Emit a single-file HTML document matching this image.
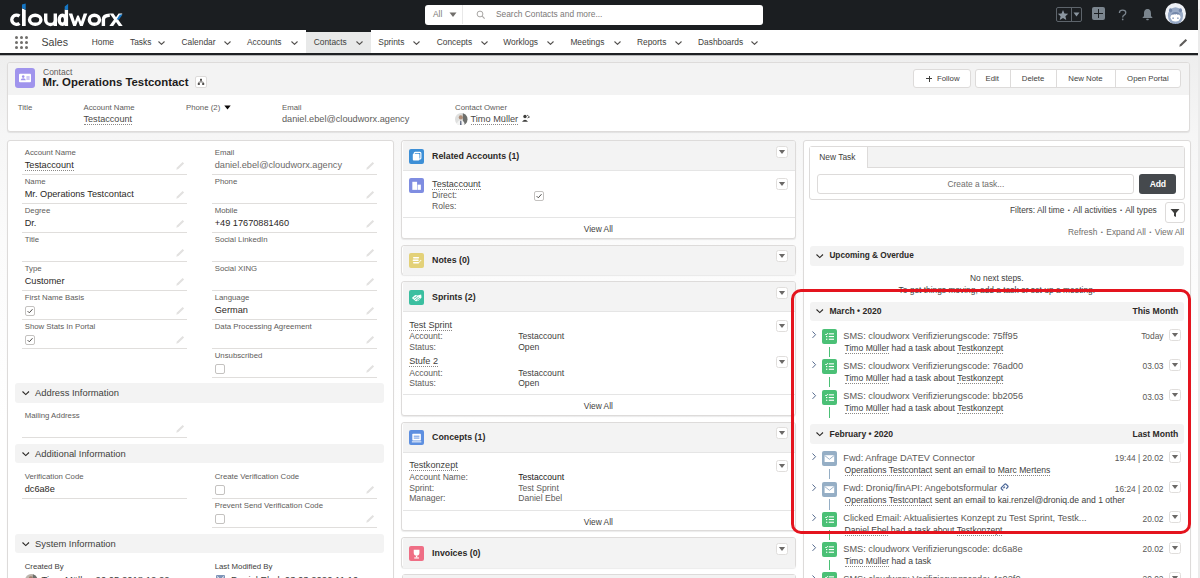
<!DOCTYPE html><html><head><meta charset="utf-8"><style>
html,body{margin:0;padding:0;width:1200px;height:578px;overflow:hidden;background:linear-gradient(to bottom,#eeeeee 0px,#eeeeee 56px,#f6f6f6 135px,#fbfbfb 240px,#ffffff 420px);font-family:"Liberation Sans",sans-serif;}
.a{position:absolute;}
.t{position:absolute;white-space:nowrap;}
.u{border-bottom:1px dotted #8a8886;}
.card{position:absolute;background:#fff;border:1px solid #dddbda;border-radius:3px;box-sizing:border-box;box-shadow:0 1px 1px rgba(0,0,0,0.08);}
</style></head><body>
<div class="a" style="left:0px;top:0px;width:1200.00px;height:30.00px;background:#1b1e21"></div>
<svg class="a" style="left:0;top:0" width="130" height="30" viewBox="0 0 130 30"><g fill="none" stroke="#fff" stroke-width="3.4"><path d="M19.5 16.2 A4.75 4.55 0 1 0 19.5 23.3"/><ellipse cx="35.2" cy="19.75" rx="5.7" ry="4.55"/><path d="M45.7 13.5 V19.9 A4.8 4.55 0 0 0 55.3 19.9 V13.5 M55.3 19 V26"/><ellipse cx="62.4" cy="19.75" rx="3.2" ry="4.55"/><ellipse cx="94.4" cy="19.75" rx="5.1" ry="4.55"/><path d="M103.4 26 V19.5 Q103.4 15.2 109.8 15.2"/></g><path d="M68.7 13.5 L72.3 13.5 L74.9 21.6 L77.2 15.4 L78.8 15.4 L81.1 21.6 L83.7 13.5 L87.3 13.5 L82.8 26 L80 26 L78 20.4 L76 26 L73.2 26 Z" fill="#fff"/><path d="M109.6 13.5 L113.4 13.5 L116 17.2 L118.6 13.5 L122.4 13.5 L118 19.6 L122.7 26 L118.8 26 L116 22.1 L113.2 26 L109.3 26 L114 19.6 Z" fill="#fff"/><path d="M22 8.2 L25.7 9.9 L25.7 26 L22 26 Z" fill="#fff"/><path d="M64.7 9.6 L68.1 10 L68.1 26 L64.7 26 Z" fill="#fff"/><path d="M22 4.5 L25.7 3.6 L25.7 9.8 L22 8.1 Z" fill="#1576c4"/><path d="M64.7 6.4 L68.1 3.8 L68.1 10 L64.7 9.5 Z" fill="#1576c4"/><path d="M116.6 19.4 L119.8 14.5 L122.6 14.5 L119 19.4 Z" fill="#1576c4"/></svg>
<div class="a" style="left:425px;top:4.5px;width:338.00px;height:20.00px;background:#fff;border-radius:3px"></div>
<div class="t" style="left:433px;top:8.00px;font-size:8.4px;line-height:12px;color:#7b7977;font-weight:normal;">All</div>
<svg class="a" style="left:449px;top:11.5px" width="8" height="6" viewBox="0 0 8 6"><path d="M0.5 0.5 L7.5 0.5 L4 5 Z" fill="#706e6b"/></svg>
<div class="a" style="left:462px;top:5px;width:1.00px;height:19.00px;background:#e8e8e8"></div>
<svg class="a" style="left:476px;top:9.5px" width="10" height="10" viewBox="0 0 10 10"><circle cx="4" cy="4" r="2.9" fill="none" stroke="#a8a6a4" stroke-width="1"/><path d="M6.2 6.2 L8.6 8.6" stroke="#a8a6a4" stroke-width="1.1"/></svg>
<div class="t" style="left:496px;top:8.00px;font-size:8.37px;line-height:12px;color:#7b7977;font-weight:normal;">Search Contacts and more...</div>
<div class="a" style="left:1055.5px;top:7px;width:26.50px;height:15.00px;border:1px solid #5d646b;border-radius:2px;box-sizing:border-box"></div>
<div class="a" style="left:1070.5px;top:7px;width:1.00px;height:15.00px;background:#5d646b"></div>
<svg class="a" style="left:1057px;top:8.5px" width="12" height="12" viewBox="0 0 24 24"><path d="M12 2 L14.9 8.9 L22.4 9.6 L16.8 14.6 L18.5 22 L12 18.1 L5.5 22 L7.2 14.6 L1.6 9.6 L9.1 8.9 Z" fill="#8b96a0"/></svg>
<svg class="a" style="left:1073px;top:12px" width="7" height="5" viewBox="0 0 7 5"><path d="M0.5 0.5 L6.5 0.5 L3.5 4.5 Z" fill="#8b96a0"/></svg>
<div class="a" style="left:1092px;top:7.2px;width:13.00px;height:13.00px;background:#7b858e;border-radius:2px"></div>
<div class="a" style="left:1097.9px;top:9.2px;width:1.20px;height:9.00px;background:#1b1e21"></div>
<div class="a" style="left:1094px;top:13.1px;width:9.00px;height:1.20px;background:#1b1e21"></div>
<svg class="a" style="left:1115px;top:7px" width="15" height="15" viewBox="1115 7 15 15"><path d="M1119.4 13 Q1119.4 10.2 1122.6 10.2 Q1125.8 10.2 1125.8 12.8 Q1125.8 14.4 1123.8 15.3 Q1122.7 15.8 1122.7 17.4" fill="none" stroke="#7b858e" stroke-width="1.3"/><circle cx="1122.7" cy="19.4" r="0.85" fill="#7b858e"/></svg>
<svg class="a" style="left:1141px;top:8px" width="13" height="13" viewBox="0 0 13 13"><path d="M6.5 1 C3.8 1 3 3.2 3 5.5 L3 8 L1.3 10 L11.7 10 L10 8 L10 5.5 C10 3.2 9.2 1 6.5 1 Z" fill="#7b858e"/><rect x="5.2" y="10.8" width="2.6" height="1.4" rx="0.7" fill="#7b858e"/></svg>
<svg class="a" style="left:1165px;top:2.75px" width="21" height="21" viewBox="0 0 21 21"><defs><clipPath id="avc"><circle cx="10.5" cy="10.5" r="10.5"/></clipPath></defs><g clip-path="url(#avc)"><rect width="21" height="21" fill="#eef1f6"/><ellipse cx="10.5" cy="12.8" rx="7.6" ry="8.6" fill="#98aac6"/><ellipse cx="5.6" cy="7.3" rx="1.6" ry="2.1" fill="#7387aa"/><ellipse cx="15.4" cy="7.3" rx="1.6" ry="2.1" fill="#7387aa"/><ellipse cx="10.5" cy="14.2" rx="5" ry="4.2" fill="#fff"/><path d="M5.6 13 Q6.5 9 10.5 9 Q14.5 9 15.4 13 Q14 11 12.5 11.8 Q11.5 10.5 10.5 11.6 Q9 10.6 8 11.8 Q7 11 5.6 13 Z" fill="#7387aa"/><ellipse cx="8.1" cy="15.2" rx="0.8" ry="0.9" fill="#8a9cbb"/><ellipse cx="12.9" cy="15.2" rx="0.8" ry="0.9" fill="#8a9cbb"/><path d="M7.5 21 L9 19.8 L10.5 21 L12 19.8 L13.5 21 Z" fill="#6f83a6"/></g></svg>
<div class="a" style="left:0px;top:30px;width:1200.00px;height:23.00px;background:#fff"></div>
<div class="a" style="left:0px;top:53px;width:1200.00px;height:2.00px;background:#1e2023"></div>
<div class="a" style="left:0px;top:55px;width:1200.00px;height:1.00px;background:rgba(30,32,35,0.28)"></div>
<div class="a" style="left:14.5px;top:35.5px;width:3px;height:3px;border-radius:50%;background:#706e6b"></div>
<div class="a" style="left:19.5px;top:35.5px;width:3px;height:3px;border-radius:50%;background:#706e6b"></div>
<div class="a" style="left:24.5px;top:35.5px;width:3px;height:3px;border-radius:50%;background:#706e6b"></div>
<div class="a" style="left:14.5px;top:40.5px;width:3px;height:3px;border-radius:50%;background:#706e6b"></div>
<div class="a" style="left:19.5px;top:40.5px;width:3px;height:3px;border-radius:50%;background:#706e6b"></div>
<div class="a" style="left:24.5px;top:40.5px;width:3px;height:3px;border-radius:50%;background:#706e6b"></div>
<div class="a" style="left:14.5px;top:45.5px;width:3px;height:3px;border-radius:50%;background:#706e6b"></div>
<div class="a" style="left:19.5px;top:45.5px;width:3px;height:3px;border-radius:50%;background:#706e6b"></div>
<div class="a" style="left:24.5px;top:45.5px;width:3px;height:3px;border-radius:50%;background:#706e6b"></div>
<div class="t" style="left:41.5px;top:36.00px;font-size:10.6px;line-height:12px;color:#3e3e3c;font-weight:normal;">Sales</div>
<div class="a" style="left:305.8px;top:30px;width:65.20px;height:23.00px;background:#e8e9e9"></div>
<div class="a" style="left:305.8px;top:30px;width:65.20px;height:1.80px;background:#1b1e21"></div>
<div class="t" style="left:91.7px;top:36.00px;font-size:8.4px;line-height:12px;color:#3e3e3c;font-weight:normal;">Home</div>
<div class="t" style="left:130px;top:36.00px;font-size:8.4px;line-height:12px;color:#3e3e3c;font-weight:normal;">Tasks</div>
<svg class="a" style="left:157.2px;top:39.58px" width="9" height="5.85" viewBox="-1 -1 9 5.85"><path d="M0.5 0.5 L3.5 3.35 L6.5 0.5" fill="none" stroke="#514f4d" stroke-width="1.1"/></svg>
<div class="t" style="left:181.5px;top:36.00px;font-size:8.4px;line-height:12px;color:#3e3e3c;font-weight:normal;">Calendar</div>
<svg class="a" style="left:223.2px;top:39.58px" width="9" height="5.85" viewBox="-1 -1 9 5.85"><path d="M0.5 0.5 L3.5 3.35 L6.5 0.5" fill="none" stroke="#514f4d" stroke-width="1.1"/></svg>
<div class="t" style="left:247px;top:36.00px;font-size:8.4px;line-height:12px;color:#3e3e3c;font-weight:normal;">Accounts</div>
<svg class="a" style="left:289.5px;top:39.58px" width="9" height="5.85" viewBox="-1 -1 9 5.85"><path d="M0.5 0.5 L3.5 3.35 L6.5 0.5" fill="none" stroke="#514f4d" stroke-width="1.1"/></svg>
<div class="t" style="left:313.75px;top:36.00px;font-size:8.4px;line-height:12px;color:#3e3e3c;font-weight:normal;">Contacts</div>
<svg class="a" style="left:354.5px;top:39.58px" width="9" height="5.85" viewBox="-1 -1 9 5.85"><path d="M0.5 0.5 L3.5 3.35 L6.5 0.5" fill="none" stroke="#514f4d" stroke-width="1.1"/></svg>
<div class="t" style="left:378.3px;top:36.00px;font-size:8.4px;line-height:12px;color:#3e3e3c;font-weight:normal;">Sprints</div>
<svg class="a" style="left:412.4px;top:39.58px" width="9" height="5.85" viewBox="-1 -1 9 5.85"><path d="M0.5 0.5 L3.5 3.35 L6.5 0.5" fill="none" stroke="#514f4d" stroke-width="1.1"/></svg>
<div class="t" style="left:436.7px;top:36.00px;font-size:8.4px;line-height:12px;color:#3e3e3c;font-weight:normal;">Concepts</div>
<svg class="a" style="left:479.5px;top:39.58px" width="9" height="5.85" viewBox="-1 -1 9 5.85"><path d="M0.5 0.5 L3.5 3.35 L6.5 0.5" fill="none" stroke="#514f4d" stroke-width="1.1"/></svg>
<div class="t" style="left:503.3px;top:36.00px;font-size:8.4px;line-height:12px;color:#3e3e3c;font-weight:normal;">Worklogs</div>
<svg class="a" style="left:546.3px;top:39.58px" width="9" height="5.85" viewBox="-1 -1 9 5.85"><path d="M0.5 0.5 L3.5 3.35 L6.5 0.5" fill="none" stroke="#514f4d" stroke-width="1.1"/></svg>
<div class="t" style="left:570.4px;top:36.00px;font-size:8.4px;line-height:12px;color:#3e3e3c;font-weight:normal;">Meetings</div>
<svg class="a" style="left:612.5px;top:39.58px" width="9" height="5.85" viewBox="-1 -1 9 5.85"><path d="M0.5 0.5 L3.5 3.35 L6.5 0.5" fill="none" stroke="#514f4d" stroke-width="1.1"/></svg>
<div class="t" style="left:637px;top:36.00px;font-size:8.4px;line-height:12px;color:#3e3e3c;font-weight:normal;">Reports</div>
<svg class="a" style="left:673.5px;top:39.58px" width="9" height="5.85" viewBox="-1 -1 9 5.85"><path d="M0.5 0.5 L3.5 3.35 L6.5 0.5" fill="none" stroke="#514f4d" stroke-width="1.1"/></svg>
<div class="t" style="left:698px;top:36.00px;font-size:8.4px;line-height:12px;color:#3e3e3c;font-weight:normal;">Dashboards</div>
<svg class="a" style="left:749.5px;top:39.58px" width="9" height="5.85" viewBox="-1 -1 9 5.85"><path d="M0.5 0.5 L3.5 3.35 L6.5 0.5" fill="none" stroke="#514f4d" stroke-width="1.1"/></svg>
<svg class="a" style="left:1178.5px;top:38.00px" width="9" height="9" viewBox="0 0 9 9"><path d="M0.3 8.7 L0.9 6.6 L6.6 0.9 L8.1 2.4 L2.4 8.1 Z" fill="#5e5c5a"/></svg>
<div class="card" style="left:7px;top:62px;width:1182.5px;height:70px;"></div>
<div class="a" style="left:8px;top:63px;width:1180.50px;height:32.00px;background:#f3f3f3;border-radius:2px 2px 0 0"></div>
<div class="a" style="left:15px;top:67.5px;width:20.00px;height:20.00px;background:#a094ed;border-radius:3px"></div>
<svg class="a" style="left:15px;top:67.5px" width="20" height="20" viewBox="0 0 20 20"><rect x="4" y="5.8" width="12" height="8.4" rx="1" fill="#fff"/><circle cx="8.2" cy="8.6" r="1.3" fill="#a094ed"/><path d="M5.6 12.3 Q5.8 10.2 8.2 10.2 Q10.6 10.2 10.8 12.3 Z" fill="#a094ed"/><rect x="11.2" y="8.5" width="3.6" height="1" rx="0.4" fill="#a094ed"/><rect x="11.2" y="10.5" width="3.6" height="1" rx="0.4" fill="#a094ed"/></svg>
<div class="t" style="left:43px;top:65.50px;font-size:8.5px;line-height:12px;color:#5e5c5a;font-weight:normal;">Contact</div>
<div class="t" style="left:42.5px;top:75.30px;font-size:11.4px;line-height:14px;color:#1e1c1b;font-weight:bold;">Mr. Operations Testcontact</div>
<div class="a" style="left:195px;top:76px;width:12.00px;height:11.60px;background:#fff;border:1px solid #dddbda;border-radius:2px;box-sizing:border-box"></div>
<svg class="a" style="left:197px;top:78px" width="8" height="8" viewBox="0 0 8 8"><rect x="3" y="0.8" width="2" height="2" fill="#514f4d"/><rect x="0.8" y="5" width="2" height="2" fill="#514f4d"/><rect x="5.2" y="5" width="2" height="2" fill="#514f4d"/><path d="M4 2.8 V4 M1.8 5 V4 H6.2 V5" fill="none" stroke="#514f4d" stroke-width="0.7"/></svg>
<div class="a" style="left:913px;top:69px;width:58.30px;height:19.00px;background:#fff;border:1px solid #dddbda;border-radius:3px;box-sizing:border-box"></div>
<div class="a" style="left:926px;top:78.2px;width:6.00px;height:0.70px;background:#3e3e3c"></div>
<div class="a" style="left:928.65px;top:75.5px;width:0.70px;height:6.10px;background:#3e3e3c"></div>
<div class="t" style="left:937px;top:72.50px;font-size:7.8px;line-height:12px;color:#3e3e3c;font-weight:normal;">Follow</div>
<div class="a" style="left:974.5px;top:69px;width:206.80px;height:19.00px;background:#fff;border:1px solid #dddbda;border-radius:3px;box-sizing:border-box"></div>
<div class="a" style="left:1010px;top:69px;width:1.00px;height:19.00px;background:#dddbda"></div>
<div class="a" style="left:1056.3px;top:69px;width:1.00px;height:19.00px;background:#dddbda"></div>
<div class="a" style="left:1114.5px;top:69px;width:1.00px;height:19.00px;background:#dddbda"></div>
<div class="t" style="left:792.3px;width:400px;top:72.50px;font-size:7.8px;line-height:12px;color:#3e3e3c;font-weight:normal;text-align:center;">Edit</div>
<div class="t" style="left:833.0999999999999px;width:400px;top:72.50px;font-size:7.8px;line-height:12px;color:#3e3e3c;font-weight:normal;text-align:center;">Delete</div>
<div class="t" style="left:885.4000000000001px;width:400px;top:72.50px;font-size:7.8px;line-height:12px;color:#3e3e3c;font-weight:normal;text-align:center;">New Note</div>
<div class="t" style="left:947.9000000000001px;width:400px;top:72.50px;font-size:7.8px;line-height:12px;color:#3e3e3c;font-weight:normal;text-align:center;">Open Portal</div>
<div class="t" style="left:17.8px;top:101.50px;font-size:7.8px;line-height:12px;color:#5e5c5a;font-weight:normal;">Title</div>
<div class="t" style="left:83.5px;top:101.50px;font-size:7.8px;line-height:12px;color:#5e5c5a;font-weight:normal;">Account Name</div>
<div class="t" style="left:186px;top:101.50px;font-size:7.8px;line-height:12px;color:#5e5c5a;font-weight:normal;">Phone (2)</div>
<div class="t" style="left:282px;top:101.50px;font-size:7.8px;line-height:12px;color:#5e5c5a;font-weight:normal;">Email</div>
<div class="t" style="left:455px;top:101.50px;font-size:7.8px;line-height:12px;color:#5e5c5a;font-weight:normal;">Contact Owner</div>
<svg class="a" style="left:223.5px;top:105px" width="7" height="5" viewBox="0 0 7 5"><path d="M0.3 0.5 L6.7 0.5 L3.5 4.5 Z" fill="#080707"/></svg>
<div class="t" style="left:83.5px;top:112.60px;font-size:9.1px;line-height:12px;color:#4a4846;font-weight:normal;"><span class="u">Testaccount</span></div>
<div class="t" style="left:282px;top:112.60px;font-size:9.2px;line-height:12px;color:#5e5c5a;font-weight:normal;">daniel.ebel@cloudworx.agency</div>
<svg class="a" style="left:455px;top:112.5px" width="12.5" height="12.5" viewBox="0 0 12 12"><defs><clipPath id="av1"><circle cx="6" cy="6" r="6"/></clipPath></defs><g clip-path="url(#av1)"><rect width="12" height="12" fill="#dfe0df"/><rect x="7.5" y="0" width="5" height="12" fill="#6d6f6c"/><circle cx="5.6" cy="4.2" r="2" fill="#b08f7a"/><path d="M1.5 12 Q2 7 5.6 7 Q9 7 9.5 12 Z" fill="#f4f4f4"/><path d="M5.2 7.5 L6 7.5 L6.2 12 L5 12 Z" fill="#2f3c5a"/></g></svg>
<div class="t" style="left:470.5px;top:112.60px;font-size:9.2px;line-height:12px;color:#4a4846;font-weight:normal;"><span class="u">Timo Müller</span></div>
<svg class="a" style="left:522px;top:114px" width="8" height="8" viewBox="0 0 8 8"><circle cx="3" cy="2.5" r="1.7" fill="#3e3e3c"/><path d="M0 7.8 Q3 3.5 6 7.8 Z" fill="#3e3e3c"/><path d="M5 1 L7.5 3 L5.5 4" fill="none" stroke="#3e3e3c" stroke-width="0.8"/></svg>
<div class="card" style="left:6.5px;top:140px;width:387px;height:460px;"></div>
<div class="t" style="left:24.7px;top:147.20px;font-size:7.8px;line-height:12px;color:#5e5c5a;font-weight:normal;">Account Name</div>
<div class="t" style="left:24.7px;top:159.30px;font-size:9.2px;line-height:12px;color:#2b2826;font-weight:normal;"><span class="u">Testaccount</span></div>
<svg class="a" style="left:175.5px;top:161.00px" width="9" height="9" viewBox="0 0 9 9"><path d="M0.3 8.7 L0.9 6.6 L6.6 0.9 L8.1 2.4 L2.4 8.1 Z" fill="#e2e1e0"/></svg>
<div class="a" style="left:22px;top:174px;width:165.00px;height:1.00px;background:#e0dedc"></div>
<div class="t" style="left:24.7px;top:176.20px;font-size:7.8px;line-height:12px;color:#5e5c5a;font-weight:normal;">Name</div>
<div class="t" style="left:24.7px;top:188.30px;font-size:9.2px;line-height:12px;color:#2b2826;font-weight:normal;">Mr. Operations Testcontact</div>
<svg class="a" style="left:175.5px;top:190.00px" width="9" height="9" viewBox="0 0 9 9"><path d="M0.3 8.7 L0.9 6.6 L6.6 0.9 L8.1 2.4 L2.4 8.1 Z" fill="#e2e1e0"/></svg>
<div class="a" style="left:22px;top:203px;width:165.00px;height:1.00px;background:#e0dedc"></div>
<div class="t" style="left:24.7px;top:205.20px;font-size:7.8px;line-height:12px;color:#5e5c5a;font-weight:normal;">Degree</div>
<div class="t" style="left:24.7px;top:217.30px;font-size:9.2px;line-height:12px;color:#2b2826;font-weight:normal;">Dr.</div>
<svg class="a" style="left:175.5px;top:219.00px" width="9" height="9" viewBox="0 0 9 9"><path d="M0.3 8.7 L0.9 6.6 L6.6 0.9 L8.1 2.4 L2.4 8.1 Z" fill="#e2e1e0"/></svg>
<div class="a" style="left:22px;top:232px;width:165.00px;height:1.00px;background:#e0dedc"></div>
<div class="t" style="left:24.7px;top:234.20px;font-size:7.8px;line-height:12px;color:#5e5c5a;font-weight:normal;">Title</div>
<svg class="a" style="left:175.5px;top:248.00px" width="9" height="9" viewBox="0 0 9 9"><path d="M0.3 8.7 L0.9 6.6 L6.6 0.9 L8.1 2.4 L2.4 8.1 Z" fill="#e2e1e0"/></svg>
<div class="a" style="left:22px;top:261px;width:165.00px;height:1.00px;background:#e0dedc"></div>
<div class="t" style="left:24.7px;top:263.20px;font-size:7.8px;line-height:12px;color:#5e5c5a;font-weight:normal;">Type</div>
<div class="t" style="left:24.7px;top:275.30px;font-size:9.2px;line-height:12px;color:#2b2826;font-weight:normal;">Customer</div>
<svg class="a" style="left:175.5px;top:277.00px" width="9" height="9" viewBox="0 0 9 9"><path d="M0.3 8.7 L0.9 6.6 L6.6 0.9 L8.1 2.4 L2.4 8.1 Z" fill="#e2e1e0"/></svg>
<div class="a" style="left:22px;top:290px;width:165.00px;height:1.00px;background:#e0dedc"></div>
<div class="t" style="left:24.7px;top:292.20px;font-size:7.8px;line-height:12px;color:#5e5c5a;font-weight:normal;">First Name Basis</div>
<div class="a" style="left:25px;top:306px;width:10.00px;height:10.00px;background:#fff;border:1px solid #c4c2c0;border-radius:2px;box-sizing:border-box"></div>
<svg class="a" style="left:25px;top:306px" width="10" height="10" viewBox="0 0 10 10"><path d="M2.6 5.1 L4.3 6.8 L7.5 3.2" fill="none" stroke="#514f4d" stroke-width="1"/></svg>
<svg class="a" style="left:175.5px;top:306.00px" width="9" height="9" viewBox="0 0 9 9"><path d="M0.3 8.7 L0.9 6.6 L6.6 0.9 L8.1 2.4 L2.4 8.1 Z" fill="#e2e1e0"/></svg>
<div class="a" style="left:22px;top:319px;width:165.00px;height:1.00px;background:#e0dedc"></div>
<div class="t" style="left:24.7px;top:321.20px;font-size:7.8px;line-height:12px;color:#5e5c5a;font-weight:normal;">Show Stats In Portal</div>
<div class="a" style="left:25px;top:335px;width:10.00px;height:10.00px;background:#fff;border:1px solid #c4c2c0;border-radius:2px;box-sizing:border-box"></div>
<svg class="a" style="left:25px;top:335px" width="10" height="10" viewBox="0 0 10 10"><path d="M2.6 5.1 L4.3 6.8 L7.5 3.2" fill="none" stroke="#514f4d" stroke-width="1"/></svg>
<svg class="a" style="left:175.5px;top:335.00px" width="9" height="9" viewBox="0 0 9 9"><path d="M0.3 8.7 L0.9 6.6 L6.6 0.9 L8.1 2.4 L2.4 8.1 Z" fill="#e2e1e0"/></svg>
<div class="a" style="left:22px;top:348px;width:165.00px;height:1.00px;background:#e0dedc"></div>
<div class="t" style="left:214.7px;top:147.20px;font-size:7.8px;line-height:12px;color:#5e5c5a;font-weight:normal;">Email</div>
<div class="t" style="left:214.7px;top:159.30px;font-size:9.2px;line-height:12px;color:#6b6967;font-weight:normal;">daniel.ebel@cloudworx.agency</div>
<svg class="a" style="left:365.5px;top:161.00px" width="9" height="9" viewBox="0 0 9 9"><path d="M0.3 8.7 L0.9 6.6 L6.6 0.9 L8.1 2.4 L2.4 8.1 Z" fill="#e2e1e0"/></svg>
<div class="a" style="left:212px;top:174px;width:165.00px;height:1.00px;background:#e0dedc"></div>
<div class="t" style="left:214.7px;top:176.20px;font-size:7.8px;line-height:12px;color:#5e5c5a;font-weight:normal;">Phone</div>
<svg class="a" style="left:365.5px;top:190.00px" width="9" height="9" viewBox="0 0 9 9"><path d="M0.3 8.7 L0.9 6.6 L6.6 0.9 L8.1 2.4 L2.4 8.1 Z" fill="#e2e1e0"/></svg>
<div class="a" style="left:212px;top:203px;width:165.00px;height:1.00px;background:#e0dedc"></div>
<div class="t" style="left:214.7px;top:205.20px;font-size:7.8px;line-height:12px;color:#5e5c5a;font-weight:normal;">Mobile</div>
<div class="t" style="left:214.7px;top:217.30px;font-size:9.2px;line-height:12px;color:#2b2826;font-weight:normal;">+49 17670881460</div>
<svg class="a" style="left:365.5px;top:219.00px" width="9" height="9" viewBox="0 0 9 9"><path d="M0.3 8.7 L0.9 6.6 L6.6 0.9 L8.1 2.4 L2.4 8.1 Z" fill="#e2e1e0"/></svg>
<div class="a" style="left:212px;top:232px;width:165.00px;height:1.00px;background:#e0dedc"></div>
<div class="t" style="left:214.7px;top:234.20px;font-size:7.8px;line-height:12px;color:#5e5c5a;font-weight:normal;">Social LinkedIn</div>
<svg class="a" style="left:365.5px;top:248.00px" width="9" height="9" viewBox="0 0 9 9"><path d="M0.3 8.7 L0.9 6.6 L6.6 0.9 L8.1 2.4 L2.4 8.1 Z" fill="#e2e1e0"/></svg>
<div class="a" style="left:212px;top:261px;width:165.00px;height:1.00px;background:#e0dedc"></div>
<div class="t" style="left:214.7px;top:263.20px;font-size:7.8px;line-height:12px;color:#5e5c5a;font-weight:normal;">Social XING</div>
<svg class="a" style="left:365.5px;top:277.00px" width="9" height="9" viewBox="0 0 9 9"><path d="M0.3 8.7 L0.9 6.6 L6.6 0.9 L8.1 2.4 L2.4 8.1 Z" fill="#e2e1e0"/></svg>
<div class="a" style="left:212px;top:290px;width:165.00px;height:1.00px;background:#e0dedc"></div>
<div class="t" style="left:214.7px;top:292.20px;font-size:7.8px;line-height:12px;color:#5e5c5a;font-weight:normal;">Language</div>
<div class="t" style="left:214.7px;top:304.30px;font-size:9.2px;line-height:12px;color:#2b2826;font-weight:normal;">German</div>
<svg class="a" style="left:365.5px;top:306.00px" width="9" height="9" viewBox="0 0 9 9"><path d="M0.3 8.7 L0.9 6.6 L6.6 0.9 L8.1 2.4 L2.4 8.1 Z" fill="#e2e1e0"/></svg>
<div class="a" style="left:212px;top:319px;width:165.00px;height:1.00px;background:#e0dedc"></div>
<div class="t" style="left:214.7px;top:321.20px;font-size:7.8px;line-height:12px;color:#5e5c5a;font-weight:normal;">Data Processing Agreement</div>
<svg class="a" style="left:365.5px;top:335.00px" width="9" height="9" viewBox="0 0 9 9"><path d="M0.3 8.7 L0.9 6.6 L6.6 0.9 L8.1 2.4 L2.4 8.1 Z" fill="#e2e1e0"/></svg>
<div class="a" style="left:212px;top:348px;width:165.00px;height:1.00px;background:#e0dedc"></div>
<div class="t" style="left:214.7px;top:350.20px;font-size:7.8px;line-height:12px;color:#5e5c5a;font-weight:normal;">Unsubscribed</div>
<div class="a" style="left:215px;top:364px;width:10.00px;height:10.00px;background:#fff;border:1px solid #c4c2c0;border-radius:2px;box-sizing:border-box"></div>
<svg class="a" style="left:365.5px;top:364.00px" width="9" height="9" viewBox="0 0 9 9"><path d="M0.3 8.7 L0.9 6.6 L6.6 0.9 L8.1 2.4 L2.4 8.1 Z" fill="#e2e1e0"/></svg>
<div class="a" style="left:212px;top:377px;width:165.00px;height:1.00px;background:#e0dedc"></div>
<div class="a" style="left:15px;top:383.3px;width:369.30px;height:19.40px;background:#f3f3f3;border-radius:3px"></div>
<svg class="a" style="left:20.5px;top:390.24px" width="9.5" height="6.12" viewBox="-1 -1 9.5 6.12"><path d="M0.5 0.5 L3.75 3.62 L7.0 0.5" fill="none" stroke="#2b2826" stroke-width="1.1"/></svg>
<div class="t" style="left:35px;top:387.40px;font-size:9.4px;line-height:12px;color:#3e3e3c;font-weight:normal;">Address Information</div>
<div class="t" style="left:24.7px;top:410.20px;font-size:7.8px;line-height:12px;color:#5e5c5a;font-weight:normal;">Mailing Address</div>
<svg class="a" style="left:175.5px;top:424.00px" width="9" height="9" viewBox="0 0 9 9"><path d="M0.3 8.7 L0.9 6.6 L6.6 0.9 L8.1 2.4 L2.4 8.1 Z" fill="#e2e1e0"/></svg>
<div class="a" style="left:22px;top:437px;width:165.00px;height:1.00px;background:#e0dedc"></div>
<div class="a" style="left:15px;top:444px;width:369.30px;height:19.30px;background:#f3f3f3;border-radius:3px"></div>
<svg class="a" style="left:20.5px;top:450.89px" width="9.5" height="6.12" viewBox="-1 -1 9.5 6.12"><path d="M0.5 0.5 L3.75 3.62 L7.0 0.5" fill="none" stroke="#2b2826" stroke-width="1.1"/></svg>
<div class="t" style="left:35px;top:448.05px;font-size:9.4px;line-height:12px;color:#3e3e3c;font-weight:normal;">Additional Information</div>
<div class="t" style="left:24.7px;top:471.20px;font-size:7.8px;line-height:12px;color:#5e5c5a;font-weight:normal;">Verification Code</div>
<div class="t" style="left:24.7px;top:483.30px;font-size:9.2px;line-height:12px;color:#2b2826;font-weight:normal;">dc6a8e</div>
<div class="a" style="left:22px;top:498px;width:165.00px;height:1.00px;background:#e0dedc"></div>
<div class="t" style="left:214.7px;top:471.20px;font-size:7.8px;line-height:12px;color:#5e5c5a;font-weight:normal;">Create Verification Code</div>
<div class="a" style="left:215px;top:485px;width:10.00px;height:10.00px;background:#fff;border:1px solid #c4c2c0;border-radius:2px;box-sizing:border-box"></div>
<svg class="a" style="left:365.5px;top:485.00px" width="9" height="9" viewBox="0 0 9 9"><path d="M0.3 8.7 L0.9 6.6 L6.6 0.9 L8.1 2.4 L2.4 8.1 Z" fill="#e2e1e0"/></svg>
<div class="a" style="left:212px;top:498px;width:165.00px;height:1.00px;background:#e0dedc"></div>
<div class="t" style="left:214.7px;top:500.20px;font-size:7.8px;line-height:12px;color:#5e5c5a;font-weight:normal;">Prevent Send Verification Code</div>
<div class="a" style="left:215px;top:514px;width:10.00px;height:10.00px;background:#fff;border:1px solid #c4c2c0;border-radius:2px;box-sizing:border-box"></div>
<svg class="a" style="left:365.5px;top:514.00px" width="9" height="9" viewBox="0 0 9 9"><path d="M0.3 8.7 L0.9 6.6 L6.6 0.9 L8.1 2.4 L2.4 8.1 Z" fill="#e2e1e0"/></svg>
<div class="a" style="left:212px;top:527px;width:165.00px;height:1.00px;background:#e0dedc"></div>
<div class="a" style="left:15px;top:534px;width:369.30px;height:19.30px;background:#f3f3f3;border-radius:3px"></div>
<svg class="a" style="left:20.5px;top:540.89px" width="9.5" height="6.12" viewBox="-1 -1 9.5 6.12"><path d="M0.5 0.5 L3.75 3.62 L7.0 0.5" fill="none" stroke="#2b2826" stroke-width="1.1"/></svg>
<div class="t" style="left:35px;top:538.05px;font-size:9.4px;line-height:12px;color:#3e3e3c;font-weight:normal;">System Information</div>
<div class="t" style="left:24.7px;top:560.70px;font-size:7.8px;line-height:12px;color:#3e3e3c;font-weight:normal;">Created By</div>
<div class="t" style="left:214.7px;top:560.70px;font-size:7.8px;line-height:12px;color:#3e3e3c;font-weight:normal;">Last Modified By</div>
<svg class="a" style="left:25px;top:573.5px" width="12.5" height="12.5" viewBox="0 0 12 12"><defs><clipPath id="av2"><circle cx="6" cy="6" r="6"/></clipPath></defs><g clip-path="url(#av2)"><rect width="12" height="12" fill="#bdb6ae"/><rect x="7.5" y="0" width="5" height="12" fill="#6d6f6c"/><circle cx="5.6" cy="4.2" r="2" fill="#a07f6a"/><path d="M1.5 12 Q2 7 5.6 7 Q9 7 9.5 12 Z" fill="#eee"/></g></svg>
<div class="t" style="left:41.5px;top:573.80px;font-size:9.5px;line-height:12px;color:#3e3e3c;font-weight:normal;"><span class="u">Timo Müller</span>, 26.05.2018 12:22</div>
<svg class="a" style="left:216px;top:575px" width="9" height="8" viewBox="0 0 9 8"><rect x="0" y="0" width="9" height="8" rx="1" fill="#7e95b8"/><path d="M1 1.5 L4.5 4.5 L8 1.5" fill="none" stroke="#fff" stroke-width="0.9"/></svg>
<div class="t" style="left:231px;top:573.80px;font-size:9.5px;line-height:12px;color:#3e3e3c;font-weight:normal;"><span class="u">Daniel Ebel</span>, 03.03.2020 11:16</div>
<div class="card" style="left:401px;top:140.2px;width:395px;height:98.80px;"></div>
<div class="a" style="left:402.5px;top:141.2px;width:392.50px;height:30.20px;background:#f3f3f3;border-radius:2px 2px 0 0;border-bottom:1px solid #e5e5e5;box-sizing:border-box"></div>
<div class="a" style="left:409.2px;top:148.60000000000002px;width:15.20px;height:15.20px;background:#3d8fd6;border-radius:2px"></div>
<svg class="a" style="left:409.2px;top:148.60000000000002px" width="15.2" height="15.2" viewBox="0 0 16 16"><rect x="4" y="5" width="7" height="7" rx="1" fill="#fff"/><rect x="5.5" y="3.5" width="7" height="7" rx="1" fill="none" stroke="#fff" stroke-width="1.2"/></svg>
<div class="t" style="left:432.1px;top:150.00px;font-size:8.8px;line-height:12px;color:#2b2826;font-weight:bold;">Related Accounts (1)</div>
<div class="a" style="left:775.5px;top:145.7px;width:12.00px;height:12.00px;background:#fff;border:1px solid #e0dedc;border-radius:2.5px;box-sizing:border-box"></div>
<svg class="a" style="left:777.50px;top:148.70px" width="8" height="6" viewBox="0 0 8 6"><path d="M0.9 0.9 L7.1 0.9 L4 5 Z" fill="#6b6967"/></svg>
<div class="a" style="left:409.2px;top:178.2px;width:15.20px;height:15.20px;background:#7f8de1;border-radius:2px"></div>
<svg class="a" style="left:409.2px;top:178.2px" width="15.2" height="15.2" viewBox="0 0 16 16"><rect x="3.5" y="4" width="5" height="8.5" fill="#fff"/><rect x="9" y="7" width="3.5" height="5.5" fill="#fff"/></svg>
<div class="t" style="left:432.1px;top:178.00px;font-size:9.1px;line-height:12px;color:#3e3e3c;font-weight:normal;"><span class="u">Testaccount</span></div>
<div class="t" style="left:432.1px;top:189.00px;font-size:8.6px;line-height:12px;color:#5e5c5a;font-weight:normal;">Direct:</div>
<div class="t" style="left:432.1px;top:199.90px;font-size:8.6px;line-height:12px;color:#5e5c5a;font-weight:normal;">Roles:</div>
<div class="a" style="left:534.4px;top:190.7px;width:10.00px;height:10.00px;background:#fff;border:1px solid #c4c2c0;border-radius:2px;box-sizing:border-box"></div>
<svg class="a" style="left:534.4px;top:190.7px" width="10" height="10" viewBox="0 0 10 10"><path d="M2.6 5.1 L4.3 6.8 L7.5 3.2" fill="none" stroke="#514f4d" stroke-width="1"/></svg>
<div class="a" style="left:775.5px;top:178.4px;width:12.00px;height:12.00px;background:#fff;border:1px solid #e0dedc;border-radius:2.5px;box-sizing:border-box"></div>
<svg class="a" style="left:777.50px;top:181.40px" width="8" height="6" viewBox="0 0 8 6"><path d="M0.9 0.9 L7.1 0.9 L4 5 Z" fill="#6b6967"/></svg>
<div class="a" style="left:402.5px;top:217px;width:392.50px;height:1.00px;background:#e5e5e5"></div>
<div class="t" style="left:398.29999999999995px;width:400px;top:222.50px;font-size:8.4px;line-height:12px;color:#3e3e3c;font-weight:normal;text-align:center;">View All</div>
<div class="card" style="left:401px;top:244.7px;width:395px;height:30.30px;"></div>
<div class="a" style="left:402.5px;top:245.7px;width:392.50px;height:29.30px;background:#f3f3f3;border-radius:2px 2px 0 0"></div>
<div class="a" style="left:409.2px;top:252.65000000000003px;width:15.20px;height:15.20px;background:#e3d178;border-radius:2px"></div>
<svg class="a" style="left:409.2px;top:252.65000000000003px" width="15.2" height="15.2" viewBox="0 0 16 16"><rect x="4.2" y="4.2" width="6.5" height="1.6" rx="0.8" fill="#fff"/><rect x="3.8" y="6.8" width="6.5" height="1.6" rx="0.8" fill="#fff"/><rect x="4.2" y="9.4" width="6.5" height="1.6" rx="0.8" fill="#fff"/><path d="M10.2 10.8 L11.2 8.4 L12.6 7 L13.2 7.6 L11.8 9 Z" fill="#fff"/></svg>
<div class="t" style="left:432.1px;top:254.05px;font-size:8.8px;line-height:12px;color:#2b2826;font-weight:bold;">Notes (0)</div>
<div class="a" style="left:775.5px;top:250.2px;width:12.00px;height:12.00px;background:#fff;border:1px solid #e0dedc;border-radius:2.5px;box-sizing:border-box"></div>
<svg class="a" style="left:777.50px;top:253.20px" width="8" height="6" viewBox="0 0 8 6"><path d="M0.9 0.9 L7.1 0.9 L4 5 Z" fill="#6b6967"/></svg>
<div class="card" style="left:401px;top:281.3px;width:395px;height:134.70px;"></div>
<div class="a" style="left:402.5px;top:282.3px;width:392.50px;height:30.20px;background:#f3f3f3;border-radius:2px 2px 0 0;border-bottom:1px solid #e5e5e5;box-sizing:border-box"></div>
<div class="a" style="left:409.2px;top:289.7px;width:15.20px;height:15.20px;background:#3bbfa0;border-radius:2px"></div>
<svg class="a" style="left:409.2px;top:289.7px" width="15.2" height="15.2" viewBox="0 0 16 16"><path d="M3 8.5 L6.5 5.2 L9 5.8 L12.8 4.8 L13.2 7.8 L9.5 11.5 L7.2 11.8 Z" fill="#fff"/><path d="M5.2 8.6 L8.4 6.8 M6.6 10.2 L10.2 7.6 M8.4 11 L11.4 8.8" stroke="#3bbfa0" stroke-width="0.9"/></svg>
<div class="t" style="left:432.1px;top:291.10px;font-size:8.8px;line-height:12px;color:#2b2826;font-weight:bold;">Sprints (2)</div>
<div class="a" style="left:775.5px;top:286.8px;width:12.00px;height:12.00px;background:#fff;border:1px solid #e0dedc;border-radius:2.5px;box-sizing:border-box"></div>
<svg class="a" style="left:777.50px;top:289.80px" width="8" height="6" viewBox="0 0 8 6"><path d="M0.9 0.9 L7.1 0.9 L4 5 Z" fill="#6b6967"/></svg>
<div class="t" style="left:409.2px;top:318.50px;font-size:9.1px;line-height:12px;color:#3e3e3c;font-weight:normal;"><span class="u">Test Sprint</span></div>
<div class="t" style="left:409.2px;top:330.00px;font-size:8.6px;line-height:12px;color:#5e5c5a;font-weight:normal;">Account:</div>
<div class="t" style="left:518.2px;top:330.00px;font-size:8.6px;line-height:12px;color:#3e3e3c;font-weight:normal;">Testaccount</div>
<div class="t" style="left:409.2px;top:340.80px;font-size:8.6px;line-height:12px;color:#5e5c5a;font-weight:normal;">Status:</div>
<div class="t" style="left:518.2px;top:340.80px;font-size:8.6px;line-height:12px;color:#3e3e3c;font-weight:normal;">Open</div>
<div class="a" style="left:775.5px;top:319.5px;width:12.00px;height:12.00px;background:#fff;border:1px solid #e0dedc;border-radius:2.5px;box-sizing:border-box"></div>
<svg class="a" style="left:777.50px;top:322.50px" width="8" height="6" viewBox="0 0 8 6"><path d="M0.9 0.9 L7.1 0.9 L4 5 Z" fill="#6b6967"/></svg>
<div class="t" style="left:409.2px;top:355.00px;font-size:9.1px;line-height:12px;color:#3e3e3c;font-weight:normal;"><span class="u">Stufe 2</span></div>
<div class="t" style="left:409.2px;top:366.50px;font-size:8.6px;line-height:12px;color:#5e5c5a;font-weight:normal;">Account:</div>
<div class="t" style="left:518.2px;top:366.50px;font-size:8.6px;line-height:12px;color:#3e3e3c;font-weight:normal;">Testaccount</div>
<div class="t" style="left:409.2px;top:377.30px;font-size:8.6px;line-height:12px;color:#5e5c5a;font-weight:normal;">Status:</div>
<div class="t" style="left:518.2px;top:377.30px;font-size:8.6px;line-height:12px;color:#3e3e3c;font-weight:normal;">Open</div>
<div class="a" style="left:775.5px;top:356px;width:12.00px;height:12.00px;background:#fff;border:1px solid #e0dedc;border-radius:2.5px;box-sizing:border-box"></div>
<svg class="a" style="left:777.50px;top:359.00px" width="8" height="6" viewBox="0 0 8 6"><path d="M0.9 0.9 L7.1 0.9 L4 5 Z" fill="#6b6967"/></svg>
<div class="a" style="left:402.5px;top:394px;width:392.50px;height:1.00px;background:#e5e5e5"></div>
<div class="t" style="left:398.29999999999995px;width:400px;top:399.50px;font-size:8.4px;line-height:12px;color:#3e3e3c;font-weight:normal;text-align:center;">View All</div>
<div class="card" style="left:401px;top:421.7px;width:395px;height:109.70px;"></div>
<div class="a" style="left:402.5px;top:422.7px;width:392.50px;height:30.00px;background:#f3f3f3;border-radius:2px 2px 0 0;border-bottom:1px solid #e5e5e5;box-sizing:border-box"></div>
<div class="a" style="left:409.2px;top:430.0px;width:15.20px;height:15.20px;background:#5d8fe0;border-radius:2px"></div>
<svg class="a" style="left:409.2px;top:430.0px" width="15.2" height="15.2" viewBox="0 0 16 16"><rect x="3.5" y="4" width="9" height="7" rx="0.5" fill="#fff"/><rect x="5" y="6" width="6" height="1" fill="#5d8fe0"/><rect x="5" y="8" width="6" height="1" fill="#5d8fe0"/><rect x="3" y="12" width="10" height="1" fill="#fff"/></svg>
<div class="t" style="left:432.1px;top:431.40px;font-size:8.8px;line-height:12px;color:#2b2826;font-weight:bold;">Concepts (1)</div>
<div class="a" style="left:775.5px;top:427.2px;width:12.00px;height:12.00px;background:#fff;border:1px solid #e0dedc;border-radius:2.5px;box-sizing:border-box"></div>
<svg class="a" style="left:777.50px;top:430.20px" width="8" height="6" viewBox="0 0 8 6"><path d="M0.9 0.9 L7.1 0.9 L4 5 Z" fill="#6b6967"/></svg>
<div class="t" style="left:409.2px;top:459.00px;font-size:9.1px;line-height:12px;color:#3e3e3c;font-weight:normal;"><span class="u">Testkonzept</span></div>
<div class="t" style="left:409.2px;top:470.70px;font-size:8.6px;line-height:12px;color:#5e5c5a;font-weight:normal;">Account Name:</div>
<div class="t" style="left:518.2px;top:470.70px;font-size:8.6px;line-height:12px;color:#181818;font-weight:normal;">Testaccount</div>
<div class="t" style="left:409.2px;top:481.50px;font-size:8.6px;line-height:12px;color:#5e5c5a;font-weight:normal;">Sprint:</div>
<div class="t" style="left:518.2px;top:481.50px;font-size:8.6px;line-height:12px;color:#5e5c5a;font-weight:normal;">Test Sprint</div>
<div class="t" style="left:409.2px;top:492.30px;font-size:8.6px;line-height:12px;color:#5e5c5a;font-weight:normal;">Manager:</div>
<div class="t" style="left:518.2px;top:492.30px;font-size:8.6px;line-height:12px;color:#5e5c5a;font-weight:normal;">Daniel Ebel</div>
<div class="a" style="left:775.5px;top:460px;width:12.00px;height:12.00px;background:#fff;border:1px solid #e0dedc;border-radius:2.5px;box-sizing:border-box"></div>
<svg class="a" style="left:777.50px;top:463.00px" width="8" height="6" viewBox="0 0 8 6"><path d="M0.9 0.9 L7.1 0.9 L4 5 Z" fill="#6b6967"/></svg>
<div class="a" style="left:402.5px;top:510px;width:392.50px;height:1.00px;background:#e5e5e5"></div>
<div class="t" style="left:398.29999999999995px;width:400px;top:515.50px;font-size:8.4px;line-height:12px;color:#3e3e3c;font-weight:normal;text-align:center;">View All</div>
<div class="card" style="left:401px;top:537.4px;width:395px;height:31.10px;"></div>
<div class="a" style="left:402.5px;top:538.4px;width:392.50px;height:30.10px;background:#f3f3f3;border-radius:2px 2px 0 0"></div>
<div class="a" style="left:409.2px;top:545.75px;width:15.20px;height:15.20px;background:#ef6e85;border-radius:2px"></div>
<svg class="a" style="left:409.2px;top:545.75px" width="15.2" height="15.2" viewBox="0 0 16 16"><path d="M5 4 H11 V7 Q11 10 8 10 Q5 10 5 7 Z" fill="#fff"/><rect x="7.3" y="10" width="1.4" height="2" fill="#fff"/><rect x="5.5" y="12" width="5" height="1.2" fill="#fff"/></svg>
<div class="t" style="left:432.1px;top:547.15px;font-size:8.8px;line-height:12px;color:#2b2826;font-weight:bold;">Invoices (0)</div>
<div class="a" style="left:775.5px;top:542.9px;width:12.00px;height:12.00px;background:#fff;border:1px solid #e0dedc;border-radius:2.5px;box-sizing:border-box"></div>
<svg class="a" style="left:777.50px;top:545.90px" width="8" height="6" viewBox="0 0 8 6"><path d="M0.9 0.9 L7.1 0.9 L4 5 Z" fill="#6b6967"/></svg>
<div class="card" style="left:401.5px;top:573.6px;width:394.5px;height:40px;"></div>
<div class="a" style="left:402.5px;top:574.6px;width:392.50px;height:25.40px;background:#f3f3f3"></div>
<div class="card" style="left:803px;top:140px;width:388px;height:460px;"></div>
<div class="a" style="left:809px;top:146px;width:376.00px;height:54.00px;border:1px solid #dddbda;border-radius:3px;box-sizing:border-box;background:#fff"></div>
<div class="a" style="left:810px;top:147px;width:374.00px;height:21.00px;background:#f3f3f3;border-bottom:1px solid #dddbda;box-sizing:border-box"></div>
<div class="a" style="left:810px;top:147px;width:57.50px;height:21.00px;background:#fff;border-right:1px solid #dddbda;box-sizing:border-box"></div>
<div class="t" style="left:819.3px;top:151.00px;font-size:8.4px;line-height:12px;color:#3e3e3c;font-weight:normal;">New Task</div>
<div class="a" style="left:817.3px;top:174px;width:316.90px;height:20.00px;border:1px solid #dddbda;border-radius:3px;box-sizing:border-box;background:#fff"></div>
<div class="t" style="left:775.9px;width:400px;top:178.00px;font-size:8.4px;line-height:12px;color:#6f6d6b;font-weight:normal;text-align:center;">Create a task...</div>
<div class="a" style="left:1139.2px;top:174px;width:37.20px;height:20.00px;background:#45494d;border-radius:3px"></div>
<div class="t" style="left:957.8px;width:400px;top:178.00px;font-size:8.6px;line-height:12px;color:#fff;font-weight:bold;text-align:center;letter-spacing:-0.2px">Add</div>
<div class="t" style="right:43.200000000000045px;top:204.30px;font-size:8.4px;line-height:12px;color:#3e3e3c;font-weight:normal;text-align:right;">Filters: All time <span style="font-size:6px;vertical-align:1px;margin:0 1.1px">•</span> All activities <span style="font-size:6px;vertical-align:1px;margin:0 1.1px">•</span> All types</div>
<div class="a" style="left:1164.5px;top:202px;width:20.30px;height:20.50px;border:1px solid #dddbda;border-radius:3px;box-sizing:border-box;background:#fff"></div>
<svg class="a" style="left:1170px;top:208px" width="10" height="10" viewBox="0 0 10 10"><path d="M0.5 1 H9.5 L6 5 V9 L4 8 V5 Z" fill="#3e3e3c"/></svg>
<div class="t" style="right:16px;top:226.40px;font-size:8.4px;line-height:12px;color:#706e6b;font-weight:normal;text-align:right;">Refresh <span style="font-size:6px;vertical-align:1px;margin:0 1.1px">•</span> Expand All <span style="font-size:6px;vertical-align:1px;margin:0 1.1px">•</span> View All</div>
<div class="a" style="left:810.2px;top:245.7px;width:373.90px;height:19.90px;background:#f3f3f3;border-radius:3px"></div>
<svg class="a" style="left:815.2px;top:252.89px" width="9.5" height="6.12" viewBox="-1 -1 9.5 6.12"><path d="M0.5 0.5 L3.75 3.62 L7.0 0.5" fill="none" stroke="#2b2826" stroke-width="1.1"/></svg>
<div class="t" style="left:829.4px;top:249.65px;font-size:8.25px;line-height:12px;color:#2b2826;font-weight:bold;">Upcoming &amp; Overdue</div>
<div class="t" style="left:796.8px;width:400px;top:271.80px;font-size:8.4px;line-height:12px;color:#3e3e3c;font-weight:normal;text-align:center;">No next steps.</div>
<div class="t" style="left:796.8px;width:400px;top:283.60px;font-size:8.4px;line-height:12px;color:#3e3e3c;font-weight:normal;text-align:center;">To get things moving, add a task or set up a meeting.</div>
<div class="a" style="left:810.2px;top:301.5px;width:373.90px;height:19.50px;background:#f3f3f3;border-radius:3px"></div>
<svg class="a" style="left:815.2px;top:308.49px" width="9.5" height="6.12" viewBox="-1 -1 9.5 6.12"><path d="M0.5 0.5 L3.75 3.62 L7.0 0.5" fill="none" stroke="#2b2826" stroke-width="1.1"/></svg>
<div class="t" style="left:829.4px;top:305.25px;font-size:8.6px;line-height:12px;color:#2b2826;font-weight:bold;">March • 2020</div>
<div class="t" style="right:21.700000000000045px;top:305.25px;font-size:8.6px;line-height:12px;color:#2b2826;font-weight:bold;text-align:right;">This Month</div>
<div class="a" style="left:810.2px;top:423.5px;width:373.90px;height:20.00px;background:#f3f3f3;border-radius:3px"></div>
<svg class="a" style="left:815.2px;top:430.74px" width="9.5" height="6.12" viewBox="-1 -1 9.5 6.12"><path d="M0.5 0.5 L3.75 3.62 L7.0 0.5" fill="none" stroke="#2b2826" stroke-width="1.1"/></svg>
<div class="t" style="left:829.4px;top:427.50px;font-size:8.6px;line-height:12px;color:#2b2826;font-weight:bold;">February • 2020</div>
<div class="t" style="right:21.700000000000045px;top:427.50px;font-size:8.6px;line-height:12px;color:#2b2826;font-weight:bold;text-align:right;">Last Month</div>
<svg class="a" style="left:810.6px;top:330.30px" width="6.07" height="9.4" viewBox="-1 -1 6.07 9.4"><path d="M0.5 0.5 L3.57 3.7 L0.5 6.9" fill="none" stroke="#54698d" stroke-width="1.0"/></svg>
<svg class="a" style="left:822px;top:329px" width="15" height="15" viewBox="0 0 15 15"><rect x="0" y="0" width="15" height="15" rx="2" fill="#4bc076"/><path d="M3.2 5 L4.2 6 L5.8 4" fill="none" stroke="#fff" stroke-width="0.9"/><rect x="6.8" y="4.3" width="5.2" height="1.1" fill="#fff"/><rect x="6.8" y="7" width="5.2" height="1.1" fill="#fff"/><rect x="6.8" y="9.7" width="5.2" height="1.1" fill="#fff"/><rect x="4" y="7" width="1.3" height="1.1" fill="#fff"/><rect x="4" y="9.7" width="1.3" height="1.1" fill="#fff"/></svg>
<div class="a" style="left:828.7px;top:346.8px;width:1.40px;height:10.40px;background:#4bc076"></div>
<div class="t" style="left:843.3px;top:329.50px;font-size:9.2px;line-height:12px;color:#5a5856;font-weight:normal;">SMS: cloudworx Verifizierungscode: 75ff95</div>
<div class="t" style="left:844.5px;top:341.70px;font-size:8.6px;line-height:12px;color:#3e3e3c;font-weight:normal;"><span class="u">Timo Müller</span> had a task about <span class="u">Testkonzept</span></div>
<div class="t" style="right:36.5px;top:330.00px;font-size:8.4px;line-height:12px;color:#5a5856;font-weight:normal;text-align:right;">Today</div>
<div class="a" style="left:1168.7px;top:328.7px;width:12.00px;height:12.00px;background:#fff;border:1px solid #e0dedc;border-radius:2.5px;box-sizing:border-box"></div>
<svg class="a" style="left:1170.70px;top:331.70px" width="8" height="6" viewBox="0 0 8 6"><path d="M0.9 0.9 L7.1 0.9 L4 5 Z" fill="#6b6967"/></svg>
<svg class="a" style="left:810.6px;top:360.30px" width="6.07" height="9.4" viewBox="-1 -1 6.07 9.4"><path d="M0.5 0.5 L3.57 3.7 L0.5 6.9" fill="none" stroke="#54698d" stroke-width="1.0"/></svg>
<svg class="a" style="left:822px;top:359px" width="15" height="15" viewBox="0 0 15 15"><rect x="0" y="0" width="15" height="15" rx="2" fill="#4bc076"/><path d="M3.2 5 L4.2 6 L5.8 4" fill="none" stroke="#fff" stroke-width="0.9"/><rect x="6.8" y="4.3" width="5.2" height="1.1" fill="#fff"/><rect x="6.8" y="7" width="5.2" height="1.1" fill="#fff"/><rect x="6.8" y="9.7" width="5.2" height="1.1" fill="#fff"/><rect x="4" y="7" width="1.3" height="1.1" fill="#fff"/><rect x="4" y="9.7" width="1.3" height="1.1" fill="#fff"/></svg>
<div class="a" style="left:828.7px;top:376.8px;width:1.40px;height:10.40px;background:#4bc076"></div>
<div class="t" style="left:843.3px;top:359.50px;font-size:9.2px;line-height:12px;color:#5a5856;font-weight:normal;">SMS: cloudworx Verifizierungscode: 76ad00</div>
<div class="t" style="left:844.5px;top:371.70px;font-size:8.6px;line-height:12px;color:#3e3e3c;font-weight:normal;"><span class="u">Timo Müller</span> had a task about <span class="u">Testkonzept</span></div>
<div class="t" style="right:36.5px;top:360.00px;font-size:8.4px;line-height:12px;color:#5a5856;font-weight:normal;text-align:right;">03.03</div>
<div class="a" style="left:1168.7px;top:358.7px;width:12.00px;height:12.00px;background:#fff;border:1px solid #e0dedc;border-radius:2.5px;box-sizing:border-box"></div>
<svg class="a" style="left:1170.70px;top:361.70px" width="8" height="6" viewBox="0 0 8 6"><path d="M0.9 0.9 L7.1 0.9 L4 5 Z" fill="#6b6967"/></svg>
<svg class="a" style="left:810.6px;top:390.80px" width="6.07" height="9.4" viewBox="-1 -1 6.07 9.4"><path d="M0.5 0.5 L3.57 3.7 L0.5 6.9" fill="none" stroke="#54698d" stroke-width="1.0"/></svg>
<svg class="a" style="left:822px;top:389.5px" width="15" height="15" viewBox="0 0 15 15"><rect x="0" y="0" width="15" height="15" rx="2" fill="#4bc076"/><path d="M3.2 5 L4.2 6 L5.8 4" fill="none" stroke="#fff" stroke-width="0.9"/><rect x="6.8" y="4.3" width="5.2" height="1.1" fill="#fff"/><rect x="6.8" y="7" width="5.2" height="1.1" fill="#fff"/><rect x="6.8" y="9.7" width="5.2" height="1.1" fill="#fff"/><rect x="4" y="7" width="1.3" height="1.1" fill="#fff"/><rect x="4" y="9.7" width="1.3" height="1.1" fill="#fff"/></svg>
<div class="a" style="left:828.7px;top:407.3px;width:1.40px;height:10.40px;background:#4bc076"></div>
<div class="t" style="left:843.3px;top:390.00px;font-size:9.2px;line-height:12px;color:#5a5856;font-weight:normal;">SMS: cloudworx Verifizierungscode: bb2056</div>
<div class="t" style="left:844.5px;top:402.20px;font-size:8.6px;line-height:12px;color:#3e3e3c;font-weight:normal;"><span class="u">Timo Müller</span> had a task about <span class="u">Testkonzept</span></div>
<div class="t" style="right:36.5px;top:390.50px;font-size:8.4px;line-height:12px;color:#5a5856;font-weight:normal;text-align:right;">03.03</div>
<div class="a" style="left:1168.7px;top:389.2px;width:12.00px;height:12.00px;background:#fff;border:1px solid #e0dedc;border-radius:2.5px;box-sizing:border-box"></div>
<svg class="a" style="left:1170.70px;top:392.20px" width="8" height="6" viewBox="0 0 8 6"><path d="M0.9 0.9 L7.1 0.9 L4 5 Z" fill="#6b6967"/></svg>
<svg class="a" style="left:810.6px;top:452.30px" width="6.07" height="9.4" viewBox="-1 -1 6.07 9.4"><path d="M0.5 0.5 L3.57 3.7 L0.5 6.9" fill="none" stroke="#54698d" stroke-width="1.0"/></svg>
<svg class="a" style="left:822px;top:451px" width="15" height="15" viewBox="0 0 15 15"><rect x="0" y="0" width="15" height="15" rx="2" fill="#95aec5"/><rect x="2.6" y="4.2" width="9.6" height="6.8" fill="#fff"/><path d="M2.8 4.6 L7.4 8.3 L12 4.6" fill="none" stroke="#95aec5" stroke-width="0.9"/></svg>
<div class="a" style="left:828.7px;top:468.8px;width:1.40px;height:10.40px;background:#95aec5"></div>
<div class="t" style="left:843.3px;top:451.50px;font-size:9.2px;line-height:12px;color:#5a5856;font-weight:normal;">Fwd: Anfrage DATEV Connector</div>
<div class="t" style="left:844.5px;top:463.70px;font-size:8.6px;line-height:12px;color:#3e3e3c;font-weight:normal;"><span class="u">Operations Testcontact</span> sent an email to <span class="u">Marc Mertens</span></div>
<div class="t" style="right:36.5px;top:452.00px;font-size:8.4px;line-height:12px;color:#5a5856;font-weight:normal;text-align:right;">19:44 | 20.02</div>
<div class="a" style="left:1168.7px;top:450.7px;width:12.00px;height:12.00px;background:#fff;border:1px solid #e0dedc;border-radius:2.5px;box-sizing:border-box"></div>
<svg class="a" style="left:1170.70px;top:453.70px" width="8" height="6" viewBox="0 0 8 6"><path d="M0.9 0.9 L7.1 0.9 L4 5 Z" fill="#6b6967"/></svg>
<svg class="a" style="left:810.6px;top:482.80px" width="6.07" height="9.4" viewBox="-1 -1 6.07 9.4"><path d="M0.5 0.5 L3.57 3.7 L0.5 6.9" fill="none" stroke="#54698d" stroke-width="1.0"/></svg>
<svg class="a" style="left:822px;top:481.5px" width="15" height="15" viewBox="0 0 15 15"><rect x="0" y="0" width="15" height="15" rx="2" fill="#95aec5"/><rect x="2.6" y="4.2" width="9.6" height="6.8" fill="#fff"/><path d="M2.8 4.6 L7.4 8.3 L12 4.6" fill="none" stroke="#95aec5" stroke-width="0.9"/></svg>
<div class="a" style="left:828.7px;top:499.3px;width:1.40px;height:10.40px;background:#95aec5"></div>
<div class="t" style="left:843.3px;top:482.00px;font-size:9.2px;line-height:12px;color:#5a5856;font-weight:normal;">Fwd: Droniq/finAPI: Angebotsformular <svg width="9" height="9" viewBox="0 0 9 9" style="vertical-align:-1px"><g fill="none" stroke="#4f6a9a" stroke-width="1.3"><path d="M3.2 7.6 L1.6 6 Q0.8 5.2 1.6 4.4 L4.6 1.4 Q5.4 0.6 6.2 1.4 L7.6 2.8 Q8.4 3.6 7.6 4.4 L6.2 5.8"/><path d="M5 3.6 L3.4 5.2"/></g></svg></div>
<div class="t" style="left:844.5px;top:494.20px;font-size:8.6px;line-height:12px;color:#3e3e3c;font-weight:normal;"><span class="u">Operations Testcontact</span> sent an email to kai.renzel@droniq.de and 1 other</div>
<div class="t" style="right:36.5px;top:482.50px;font-size:8.4px;line-height:12px;color:#5a5856;font-weight:normal;text-align:right;">16:24 | 20.02</div>
<div class="a" style="left:1168.7px;top:481.2px;width:12.00px;height:12.00px;background:#fff;border:1px solid #e0dedc;border-radius:2.5px;box-sizing:border-box"></div>
<svg class="a" style="left:1170.70px;top:484.20px" width="8" height="6" viewBox="0 0 8 6"><path d="M0.9 0.9 L7.1 0.9 L4 5 Z" fill="#6b6967"/></svg>
<svg class="a" style="left:810.6px;top:513.00px" width="6.07" height="9.4" viewBox="-1 -1 6.07 9.4"><path d="M0.5 0.5 L3.57 3.7 L0.5 6.9" fill="none" stroke="#54698d" stroke-width="1.0"/></svg>
<svg class="a" style="left:822px;top:511.7px" width="15" height="15" viewBox="0 0 15 15"><rect x="0" y="0" width="15" height="15" rx="2" fill="#4bc076"/><path d="M3.2 5 L4.2 6 L5.8 4" fill="none" stroke="#fff" stroke-width="0.9"/><rect x="6.8" y="4.3" width="5.2" height="1.1" fill="#fff"/><rect x="6.8" y="7" width="5.2" height="1.1" fill="#fff"/><rect x="6.8" y="9.7" width="5.2" height="1.1" fill="#fff"/><rect x="4" y="7" width="1.3" height="1.1" fill="#fff"/><rect x="4" y="9.7" width="1.3" height="1.1" fill="#fff"/></svg>
<div class="a" style="left:828.7px;top:529.5px;width:1.40px;height:10.40px;background:#4bc076"></div>
<div class="t" style="left:843.3px;top:512.20px;font-size:9.2px;line-height:12px;color:#5a5856;font-weight:normal;">Clicked Email: Aktualisiertes Konzept zu Test Sprint, Testk...</div>
<div class="t" style="left:844.5px;top:524.40px;font-size:8.6px;line-height:12px;color:#3e3e3c;font-weight:normal;"><span class="u">Daniel Ebel</span> had a task about <span class="u">Testkonzept</span></div>
<div class="t" style="right:36.5px;top:512.70px;font-size:8.4px;line-height:12px;color:#5a5856;font-weight:normal;text-align:right;">20.02</div>
<div class="a" style="left:1168.7px;top:511.4px;width:12.00px;height:12.00px;background:#fff;border:1px solid #e0dedc;border-radius:2.5px;box-sizing:border-box"></div>
<svg class="a" style="left:1170.70px;top:514.40px" width="8" height="6" viewBox="0 0 8 6"><path d="M0.9 0.9 L7.1 0.9 L4 5 Z" fill="#6b6967"/></svg>
<svg class="a" style="left:810.6px;top:543.30px" width="6.07" height="9.4" viewBox="-1 -1 6.07 9.4"><path d="M0.5 0.5 L3.57 3.7 L0.5 6.9" fill="none" stroke="#54698d" stroke-width="1.0"/></svg>
<svg class="a" style="left:822px;top:542px" width="15" height="15" viewBox="0 0 15 15"><rect x="0" y="0" width="15" height="15" rx="2" fill="#4bc076"/><path d="M3.2 5 L4.2 6 L5.8 4" fill="none" stroke="#fff" stroke-width="0.9"/><rect x="6.8" y="4.3" width="5.2" height="1.1" fill="#fff"/><rect x="6.8" y="7" width="5.2" height="1.1" fill="#fff"/><rect x="6.8" y="9.7" width="5.2" height="1.1" fill="#fff"/><rect x="4" y="7" width="1.3" height="1.1" fill="#fff"/><rect x="4" y="9.7" width="1.3" height="1.1" fill="#fff"/></svg>
<div class="a" style="left:828.7px;top:559.8px;width:1.40px;height:10.40px;background:#4bc076"></div>
<div class="t" style="left:843.3px;top:542.50px;font-size:9.2px;line-height:12px;color:#5a5856;font-weight:normal;">SMS: cloudworx Verifizierungscode: dc6a8e</div>
<div class="t" style="left:844.5px;top:554.70px;font-size:8.6px;line-height:12px;color:#3e3e3c;font-weight:normal;"><span class="u">Timo Müller</span> had a task</div>
<div class="t" style="right:36.5px;top:543.00px;font-size:8.4px;line-height:12px;color:#5a5856;font-weight:normal;text-align:right;">20.02</div>
<div class="a" style="left:1168.7px;top:541.7px;width:12.00px;height:12.00px;background:#fff;border:1px solid #e0dedc;border-radius:2.5px;box-sizing:border-box"></div>
<svg class="a" style="left:1170.70px;top:544.70px" width="8" height="6" viewBox="0 0 8 6"><path d="M0.9 0.9 L7.1 0.9 L4 5 Z" fill="#6b6967"/></svg>
<svg class="a" style="left:810.6px;top:573.50px" width="6.07" height="9.4" viewBox="-1 -1 6.07 9.4"><path d="M0.5 0.5 L3.57 3.7 L0.5 6.9" fill="none" stroke="#54698d" stroke-width="1.0"/></svg>
<svg class="a" style="left:822px;top:572.2px" width="15" height="15" viewBox="0 0 15 15"><rect x="0" y="0" width="15" height="15" rx="2" fill="#4bc076"/><path d="M3.2 5 L4.2 6 L5.8 4" fill="none" stroke="#fff" stroke-width="0.9"/><rect x="6.8" y="4.3" width="5.2" height="1.1" fill="#fff"/><rect x="6.8" y="7" width="5.2" height="1.1" fill="#fff"/><rect x="6.8" y="9.7" width="5.2" height="1.1" fill="#fff"/><rect x="4" y="7" width="1.3" height="1.1" fill="#fff"/><rect x="4" y="9.7" width="1.3" height="1.1" fill="#fff"/></svg>
<div class="a" style="left:828.7px;top:590.0px;width:1.40px;height:10.40px;background:#4bc076"></div>
<div class="t" style="left:843.3px;top:572.70px;font-size:9.2px;line-height:12px;color:#5a5856;font-weight:normal;">SMS: cloudworx Verifizierungscode: 4e02f0</div>
<div class="t" style="left:844.5px;top:584.90px;font-size:8.6px;line-height:12px;color:#3e3e3c;font-weight:normal;"><span class="u">Timo Müller</span> had a task</div>
<div class="t" style="right:36.5px;top:573.20px;font-size:8.4px;line-height:12px;color:#5a5856;font-weight:normal;text-align:right;">20.02</div>
<div class="a" style="left:1168.7px;top:571.9000000000001px;width:12.00px;height:12.00px;background:#fff;border:1px solid #e0dedc;border-radius:2.5px;box-sizing:border-box"></div>
<svg class="a" style="left:1170.70px;top:574.90px" width="8" height="6" viewBox="0 0 8 6"><path d="M0.9 0.9 L7.1 0.9 L4 5 Z" fill="#6b6967"/></svg>
<div class="a" style="left:791px;top:289.3px;width:400px;height:245.2px;border:3.3px solid #e4141e;border-radius:10px;box-sizing:border-box"></div>
<div class="a" style="left:1197.6px;top:0px;width:2.40px;height:578.00px;background:#f2f2f2"></div>
<div class="a" style="left:1198.2px;top:9px;width:1.80px;height:569.00px;background:#ebebeb"></div>
</body></html>
